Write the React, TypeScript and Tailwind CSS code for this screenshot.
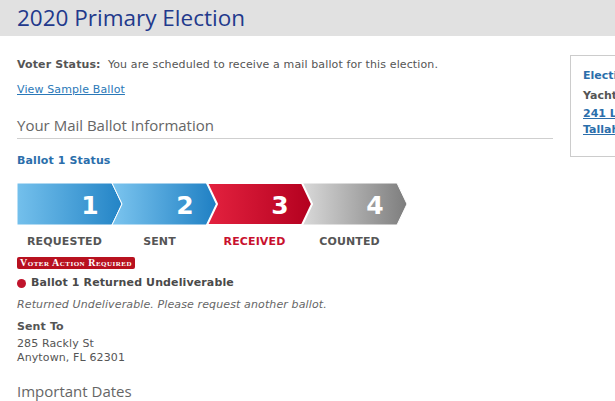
import React from 'react';

const font = { fontFamily: '"DejaVu Sans", Verdana, sans-serif' };

type Step = { n: string; label: string; from: string; to: string; active?: boolean };

const steps: Step[] = [
  { n: '1', label: 'REQUESTED', from: '#74c0ec', to: '#2384c6' },
  { n: '2', label: 'SENT', from: '#7cc5ef', to: '#1e7fc3' },
  { n: '3', label: 'RECEIVED', from: '#e4223f', to: '#b3001f', active: true },
  { n: '4', label: 'COUNTED', from: '#dadada', to: '#7d7d7d' },
];

const pitch = 95;
const tip = 10;
const h = 42;

function segPoints(i: number) {
  const x0 = i * pitch;
  const x1 = x0 + pitch;
  const pts = [`${x0},0`, `${x1},0`, `${x1 + tip},${h / 2}`, `${x1},${h}`, `${x0},${h}`];
  if (i > 0) pts.push(`${x0 + tip},${h / 2}`);
  return pts.join(' ');
}

function Stepper() {
  return (
    <svg width="410" height={h + 2} viewBox={`-1 -1 410 ${h + 2}`} className="block">
      <defs>
        {steps.map((s, i) => (
          <linearGradient key={i} id={`g${i}`} x1="0" y1="0" x2="1" y2="0">
            <stop offset="0" stopColor={s.from} />
            <stop offset="1" stopColor={s.to} />
          </linearGradient>
        ))}
      </defs>
      {steps.map((s, i) =>
        s.active ? null : (
          <polygon key={i} points={segPoints(i)} fill={`url(#g${i})`} stroke="#ffffff" strokeWidth="1" />
        )
      )}
      {/* active step drawn last so its white outline sits on top */}
      {steps.map((s, i) =>
        s.active ? (
          <polygon key={i} points={segPoints(i)} fill={`url(#g${i})`} stroke="#ffffff" strokeWidth="2" strokeLinejoin="round" />
        ) : null
      )}
      {steps.map((s, i) => (
        <text
          key={i}
          x={i * pitch + pitch - 22}
          y="31"
          textAnchor="middle"
          fill="#ffffff"
          fontSize="25"
          fontWeight="700"
          style={font}
        >
          {s.n}
        </text>
      ))}
    </svg>
  );
}

export default function App() {
  return (
    <div className="w-[615px] h-[401px] overflow-hidden bg-white text-[#555] tracking-[0.12px]" style={font}>
      {/* Header */}
      <div className="h-[36px] bg-[#e1e1e1] px-[17px] flex items-center">
        <h1 className="text-[22.5px] text-[#22398c] leading-none tracking-normal" style={{ fontFamily: '"Open Sans", sans-serif' }}>
          2020 Primary Election
        </h1>
      </div>

      <div className="flex">
        {/* Main column */}
        <div className="w-[553px] shrink-0 pl-[17px]">
          <p className="mt-[21px] text-[11px] leading-4">
            <span className="font-bold">Voter Status:</span>&nbsp; You are scheduled to receive a mail ballot for this election.
          </p>
          <a href="#" className="block mt-[9px] text-[11px] leading-4 text-[#2a78b8] underline w-fit">
            View Sample Ballot
          </a>

          <h2
            className="mt-[17px] text-[15px] leading-5 text-[#666] pb-[3px] border-b border-[#cfcfcf] tracking-normal"
            style={{ fontFamily: '"Open Sans", sans-serif' }}
          >
            Your Mail Ballot Information
          </h2>

          <p className="mt-[14px] text-[11px] leading-4 font-bold text-[#2b6eab]">Ballot 1 Status</p>

          <div className="mt-[13px] -ml-[1px]">
            <Stepper />
          </div>

          <div className="mt-[8px] grid grid-cols-[95px_95px_95px_95px]">
            {steps.map((s) => (
              <span
                key={s.label}
                className={`text-center text-[11px] leading-4 font-bold ${s.active ? 'text-[#c8102e]' : 'text-[#555]'}`}
              >
                {s.label}
              </span>
            ))}
          </div>

          <div className="mt-[7px] w-fit bg-[#b8111f] rounded-[2px] px-[3px] h-[12px] flex items-center">
            <span
              className="text-[10px] leading-none font-bold text-white [font-variant:small-caps] tracking-[0.5px]"
              style={{ fontFamily: '"Liberation Serif", serif' }}
            >
              Voter Action Required
            </span>
          </div>

          <div className="mt-[6px] flex items-center gap-[5px] leading-4">
            <span className="w-[9px] h-[9px] rounded-full bg-[#c0142c]" />
            <span className="text-[11px] font-bold text-[#4a4a4a]">Ballot 1 Returned Undeliverable</span>
          </div>

          <p className="mt-[6px] text-[11px] leading-4 italic text-[#666]">
            Returned Undeliverable. Please request another ballot.
          </p>

          <p className="mt-[6px] text-[11px] leading-4 font-bold text-[#555]">Sent To</p>
          <p className="mt-[2px] text-[11px] leading-[14px] text-[#555]">285 Rackly St</p>
          <p className="text-[11px] leading-[14px] text-[#555]">Anytown, FL 62301</p>

          <h2 className="mt-[16px] text-[15px] leading-5 text-[#666] tracking-normal" style={{ fontFamily: '"Open Sans", sans-serif' }}>
            Important Dates
          </h2>
        </div>

        {/* Side panel */}
        <aside className="ml-[17px] mt-[19px] w-[200px] h-[102px] shrink-0 border border-[#cccccc] pl-[12px] pt-[12px] text-[11px] font-bold tracking-normal">
          <p className="leading-4 text-[#2b6eab]">Election Day Polling Place</p>
          <p className="mt-[4px] leading-4 text-[#555]">Yacht Club</p>
          <p className="mt-[2px] leading-4 text-[#2b6eab] underline">241 Lake Dr</p>
          <p className="leading-4 text-[#2b6eab] underline">Tallahassee, FL</p>
        </aside>
      </div>
    </div>
  );
}
